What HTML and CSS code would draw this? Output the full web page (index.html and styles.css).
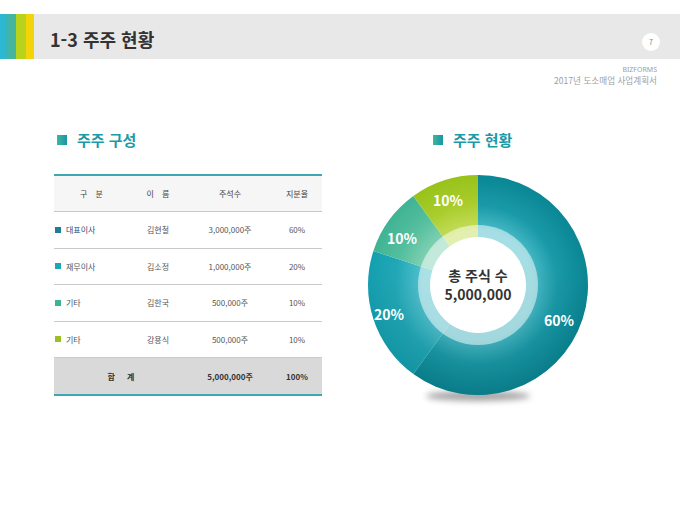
FILE: index.html
```html
<!DOCTYPE html>
<html lang="ko">
<head>
<meta charset="utf-8">
<title>1-3 주주 현황</title>
<link rel="stylesheet" href="styles.css">
</head>
<body>
<div class="page">
  <header class="topbar">
    <div class="strip"></div>
    <h1 class="title">1-3 주주 현황</h1>
    <div class="page-no">7</div>
  </header>
  <div class="meta">
    <div class="meta-brand">BIZFORMS</div>
    <div class="meta-doc">2017년 도소매업 사업계획서</div>
  </div>
  <main class="content">
    <section class="col-left">
      <h2 class="sec-title"><span class="sec-icon"></span>주주 구성</h2>
      <div class="tbl">
        <div class="tr thead">
          <div class="c c1 center spaced">구 분</div>
          <div class="c spaced">이 름</div>
          <div class="c">주석수</div>
          <div class="c">지분율</div>
        </div>
        <div class="tr">
          <div class="c c1"><span class="sw sw1"></span><span class="lbl-main">대표이사</span></div>
          <div class="c">김현철</div>
          <div class="c">3,000,000주</div>
          <div class="c">60%</div>
        </div>
        <div class="tr">
          <div class="c c1"><span class="sw sw2"></span><span class="lbl">재무이사</span></div>
          <div class="c">김소정</div>
          <div class="c">1,000,000주</div>
          <div class="c">20%</div>
        </div>
        <div class="tr">
          <div class="c c1"><span class="sw sw3"></span><span class="lbl">기타</span></div>
          <div class="c">김한국</div>
          <div class="c">500,000주</div>
          <div class="c">10%</div>
        </div>
        <div class="tr">
          <div class="c c1"><span class="sw sw4"></span><span class="lbl">기타</span></div>
          <div class="c">강용식</div>
          <div class="c">500,000주</div>
          <div class="c">10%</div>
        </div>
        <div class="tr tfoot">
          <div class="c c12 spaced-wide">합 계</div>
          <div class="c">5,000,000주</div>
          <div class="c">100%</div>
        </div>
      </div>
    </section>
    <section class="col-right">
      <h2 class="sec-title sec-title-right"><span class="sec-icon"></span>주주 현황</h2>
      <svg class="donut" width="230" height="240" viewBox="0 0 230 240">
        <defs>
          <radialGradient id="gA" gradientUnits="userSpaceOnUse" cx="113" cy="111" r="110">
            <stop offset="0.5" stop-color="#4bbcc8"/>
            <stop offset="0.72" stop-color="#1a9aa8"/>
            <stop offset="1" stop-color="#0a8694"/>
          </radialGradient>
          <radialGradient id="gB" gradientUnits="userSpaceOnUse" cx="113" cy="111" r="110">
            <stop offset="0.5" stop-color="#55c3cf"/>
            <stop offset="0.75" stop-color="#22a8b7"/>
            <stop offset="1" stop-color="#14a0b0"/>
          </radialGradient>
          <radialGradient id="gC" gradientUnits="userSpaceOnUse" cx="113" cy="111" r="110">
            <stop offset="0.5" stop-color="#86d3b5"/>
            <stop offset="0.75" stop-color="#55bf9f"/>
            <stop offset="1" stop-color="#3fb393"/>
          </radialGradient>
          <radialGradient id="gD" gradientUnits="userSpaceOnUse" cx="113" cy="111" r="110">
            <stop offset="0.5" stop-color="#c6de5c"/>
            <stop offset="0.75" stop-color="#a9cc2c"/>
            <stop offset="1" stop-color="#98c21a"/>
          </radialGradient>
          <linearGradient id="shade" x1="0" y1="0" x2="0" y2="1">
            <stop offset="0.4" stop-color="#000" stop-opacity="0"/>
            <stop offset="1" stop-color="#00303a" stop-opacity="0.12"/>
          </linearGradient>
          <filter id="blur" x="-50%" y="-200%" width="200%" height="500%">
            <feGaussianBlur stdDeviation="3"/>
          </filter>
        </defs>
        <ellipse cx="113" cy="222" rx="52" ry="5" fill="#7a7a7a" opacity="0.7" filter="url(#blur)"/>
        <path d="M113 111 L113 1 A110 110 0 1 1 48.34 199.99 Z" fill="url(#gA)"/>
        <path d="M113 111 L48.34 199.99 A110 110 0 0 1 8.38 77.01 Z" fill="url(#gB)"/>
        <path d="M113 111 L8.38 77.01 A110 110 0 0 1 48.34 22.01 Z" fill="url(#gC)"/>
        <path d="M113 111 L48.34 22.01 A110 110 0 0 1 113 1 Z" fill="url(#gD)"/>
        <circle cx="113" cy="111" r="110" fill="url(#shade)"/>
        <circle cx="113" cy="111" r="60" fill="#ffffff" opacity="0.5"/>
        <circle cx="113" cy="111" r="48" fill="#ffffff"/>
        <text class="pct" x="194" y="152" text-anchor="middle">60%</text>
        <text class="pct" x="24" y="146" text-anchor="middle">20%</text>
        <text class="pct" x="37" y="70" text-anchor="middle">10%</text>
        <text class="pct" x="83" y="32" text-anchor="middle">10%</text>
        <text class="ctr" x="113" y="107" text-anchor="middle">총 주식 수</text>
        <text class="ctr" x="113" y="126" text-anchor="middle">5,000,000</text>
      </svg>
    </section>
  </main>
</div>
</body>
</html>
```
FILE: styles.css
```css
* { box-sizing: border-box; }
html, body { margin: 0; padding: 0; background: #ffffff; }
body {
  font-family: "Noto Sans CJK KR", "Noto Sans", sans-serif;
  color: #333;
}
.page { width: 680px; height: 510px; overflow: hidden; }

.topbar {
  margin-top: 14px;
  height: 45px;
  background: #e8e8e8;
  display: flex;
  align-items: center;
}
.strip {
  width: 34px;
  height: 100%;
  background: linear-gradient(90deg, #2cb7d2 0 5px, #3cb4b0 5px 9px, #45b69c 9px 16px, #b9d21c 16px 26px, #f3d30a 26px 34px);
}
.title {
  margin: 0 0 0 16px;
  font-size: 18px;
  line-height: 24px;
  font-weight: 700;
  color: #333;
  flex: 1;
  padding-top: 5px;
}
.page-no {
  width: 18px;
  height: 18px;
  border-radius: 50%;
  background: #fff;
  color: #888;
  font-size: 7px;
  line-height: 18px;
  text-align: center;
  margin-right: 20px;
  align-self: flex-end;
  margin-bottom: 8px;
}

.meta {
  margin-top: 5px;
  padding-right: 23px;
  text-align: right;
  color: #a0a0a0;
  line-height: 11px;
}
.meta-brand { font-family: "Noto Sans", sans-serif; font-size: 7px; font-weight: 400; }
.meta-doc { font-size: 8.6px; }

.content {
  display: flex;
  padding-left: 54px;
  padding-top: 44px;
}
.col-left { width: 268px; }
.col-right { width: 230px; margin-left: 43px; }

.sec-title {
  margin: 0 0 24px 3px;
  display: flex;
  align-items: center;
  gap: 10px;
  font-size: 15px;
  line-height: 20px;
  font-weight: 700;
  color: #1b9aa7;
}
.sec-title-right { margin-left: 68px; }
.sec-icon {
  width: 10px;
  height: 10px;
  background: linear-gradient(90deg, #3cb79e, #1a95a6);
}

.tbl {
  border-top: 2px solid #3fa7b1;
  border-bottom: 2px solid #3fa7b1;
  font-size: 8px;
  color: #555;
}
.tr {
  display: grid;
  grid-template-columns: 74px 60px 84px 50px;
  align-items: center;
  height: 36.5px;
  border-bottom: 1px solid #c9c9c9;
}
.tr.thead {
  height: 36px;
  background: #f6f6f6;
  color: #444;
}
.tr.tfoot {
  grid-template-columns: 134px 84px 50px;
  height: 36px;
  border-bottom: none;
  background: #d9d9d9;
  font-weight: 700;
  color: #333;
}
.c { text-align: center; white-space: nowrap; }
.c1 { text-align: left; display: flex; align-items: center; padding-left: 1px; }
.c1.center { justify-content: center; }
.spaced { word-spacing: 6px; }
.spaced-wide { word-spacing: 10px; }
.sw { width: 6px; height: 6px; margin-right: 5px; }
.sw1 { background: #1d7e94; }
.sw2 { background: #1ca6b8; }
.sw3 { background: #3bb394; }
.sw4 { background: #9cbf22; }
.lbl-main { color: #3d4c70; }
.lbl { color: #4e5666; }

.donut { display: block; overflow: visible; }
.pct {
  font-family: "Noto Sans CJK KR", "Noto Sans", sans-serif;
  font-size: 14px;
  font-weight: 700;
  fill: #ffffff;
}
.ctr {
  font-family: "Noto Sans CJK KR", sans-serif;
  font-size: 14px;
  font-weight: 700;
  fill: #333;
}
```
